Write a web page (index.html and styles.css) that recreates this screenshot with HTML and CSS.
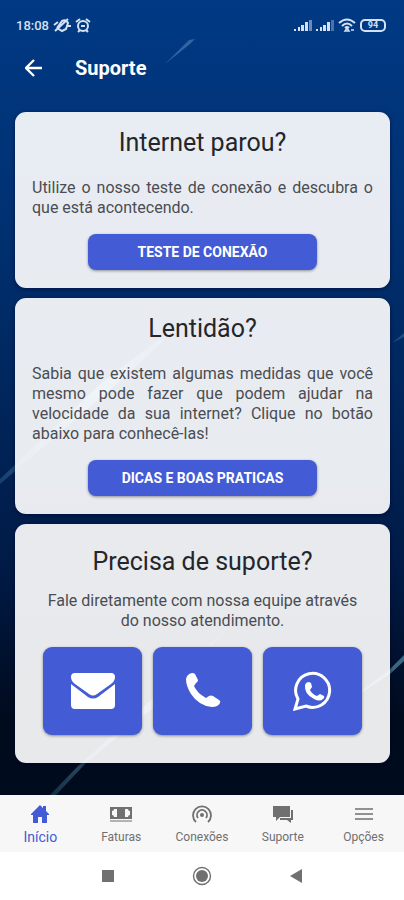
FILE: index.html
```html
<!DOCTYPE html>
<html lang="pt-BR">
  <head>
    <meta charset="UTF-8" />
    <meta name="viewport" content="width=device-width, initial-scale=1.0" />
    <title>Suporte</title>
    <link rel="stylesheet" href="styles.css">
  </head>
  <body>
    <div class="screen">
      <svg class="streaks" viewBox="0 0 404 795" preserveAspectRatio="none" aria-hidden="true">
        <defs>
          <linearGradient id="streak" x1="0" y1="1" x2="1" y2="0">
            <stop offset="0" stop-color="#6fb6d8" stop-opacity="0.2" />
            <stop offset="0.5" stop-color="#7fc0dd" stop-opacity="0.6" />
            <stop offset="1" stop-color="#6fb6d8" stop-opacity="0.1" />
          </linearGradient>
        </defs>
        <path d="M165 64L189 40l6-1-5 5z" fill="#6d9bd0" opacity="0.45" />
        <path d="M0 479L100 384 202 306 110 390 0 484z" fill="url(#streak)" />
        <path d="M392 343l12-10v4l-12 6z" fill="#6fb6d8" opacity="0.25" />
        <path d="M50 795L78 766 160 692 232 622 170 694 86 763 56 795z" fill="url(#streak)" />
        <path d="M350 700L390 669 404 655v6L390 674z" fill="#5fa3c0" opacity="0.6" />
      </svg>

      <div class="status-bar">
        <div class="status-group">
          <span class="clock">18:08</span>
          <svg width="18" height="16" viewBox="0 0 18 16">
            <path d="M4 11l5-7q4-2 6 2l-2 6-4 2-5-3M2 14L15 2M1 8l4-3M14 9h4" fill="none" stroke="currentColor" stroke-width="2" />
          </svg>
          <svg width="16" height="16" viewBox="0 0 16 16">
            <circle cx="8" cy="9" r="5" fill="none" stroke="currentColor" stroke-width="2" />
            <path d="M1 5l4-3M15 5l-4-3M6 9h4M3 15l2-2M13 15l-2-2" fill="none" stroke="currentColor" stroke-width="2" />
          </svg>
        </div>
        <div class="status-group">
          <svg width="18" height="12" viewBox="0 0 18 12" fill="currentColor">
            <path d="M0 10h2v2H0zM4 8h2v4H4zM7 6h3v6H7zM11 3h3v9h-3z" />
            <path d="M15 1h3v11h-3z" opacity="0.5" />
          </svg>
          <svg width="18" height="12" viewBox="0 0 18 12" fill="currentColor">
            <path d="M0 10h2v2H0zM4 8h2v4H4zM7 6h3v6H7zM11 3h3v9h-3z" />
            <path d="M15 1h3v11h-3z" opacity="0.35" />
          </svg>
          <svg width="18" height="14" viewBox="0 0 18 14" fill="none" stroke="currentColor" stroke-width="2">
            <path d="M1 5Q9-2 17 5M4 8Q9 3 14 8M7 10Q9 8 11 10" />
            <path d="M9 10l2 3H7zM13 12h3" stroke-width="1.5" />
          </svg>
          <span class="battery">94</span>
        </div>
      </div>

      <header class="header">
        <button class="back" aria-label="Voltar">
          <svg width="18" height="18" viewBox="0 0 18 18">
            <path d="M17 9H2M9 1L1 9l8 8" fill="none" stroke="currentColor" stroke-width="2.3" />
          </svg>
        </button>
        <h1>Suporte</h1>
      </header>

      <main class="cards">
        <section class="card">
          <h2>Internet parou?</h2>
          <p>Utilize o nosso teste de conexão e descubra o que está acontecendo.</p>
          <button class="button">TESTE DE CONEXÃO</button>
        </section>

        <section class="card">
          <h2>Lentidão?</h2>
          <p>
            Sabia que existem algumas medidas que você mesmo pode fazer que podem
            ajudar na velocidade da sua internet? Clique no botão abaixo para
            conhecê-las!
          </p>
          <button class="button">DICAS E BOAS PRATICAS</button>
        </section>

        <section class="card card-contact">
          <h2>Precisa de suporte?</h2>
          <p>Fale diretamente com nossa equipe através do nosso atendimento.</p>
          <div class="tiles">
            <button class="tile" aria-label="E-mail">
              <svg width="46" height="36" viewBox="0 0 46 36" fill="currentColor">
                <path d="M5 0h36q4 0 4 4 0 4-4 7L27 21q-4 3-8 0L5 11Q1 8 1 4q0-4 4-4z" />
                <path d="M1 11l17 13q5 3 10 0l17-13v21q0 4-4 4H5q-4 0-4-4z" />
              </svg>
            </button>
            <button class="tile" aria-label="Telefone">
              <svg width="38" height="38" viewBox="0 0 38 38" fill="currentColor">
                <path d="M2 7Q3 2 8 1q2 0 3 1l3 6q0 2-2 3l-2 3q3 7 12 12l3-2q2-1 4 0l6 4q2 1 1 3-2 4-8 4Q15 34 7 22 2 14 2 7z" />
              </svg>
            </button>
            <button class="tile" aria-label="WhatsApp">
              <svg width="40" height="40" viewBox="0 0 40 40" fill="currentColor">
                <path d="M5 28a17 17 0 1 1 8 7L2 38z" fill="none" stroke="currentColor" stroke-width="3" />
                <path d="M12 14q1-3 4-3l2 1 1 4-2 3q2 4 7 6l3-2 4 2q1 2-1 3-3 3-9 0-10-5-9-14z" />
              </svg>
            </button>
          </div>
        </section>
      </main>
    </div>

    <nav class="tabs">
      <a class="tab active" href="#inicio">
        <svg width="20" height="20" viewBox="0 0 20 20" fill="currentColor">
          <path d="M10 1l3 3V2h3v5l3 3v1h-2v8h-5v-6H8v6H3v-8H1v-1z" />
        </svg>
        <span>Início</span>
      </a>
      <a class="tab" href="#faturas">
        <svg width="22" height="20" viewBox="0 0 22 20" fill="currentColor">
          <path d="M0 3h22v12H0zM4 5q0 2-2 2v4q2 0 2 2h3V5zM18 5h-3v8h3q0-2 2-2V7q-2 0-2-2z" fill-rule="evenodd" />
          <ellipse cx="11" cy="9" rx="4" ry="5" />
          <path d="M0 16h22v2H0z" opacity="0.5" />
        </svg>
        <span>Faturas</span>
      </a>
      <a class="tab" href="#conexoes">
        <svg width="22" height="20" viewBox="0 0 22 20" fill="none" stroke="currentColor" stroke-width="1.8">
          <path d="M5 18a9 9 0 1 1 12 0M7 14a5 5 0 1 1 8 0" />
          <circle cx="11" cy="11" r="2" fill="currentColor" stroke="none" />
        </svg>
        <span>Conexões</span>
      </a>
      <a class="tab" href="#suporte">
        <svg width="22" height="20" viewBox="0 0 22 20" fill="currentColor">
          <path d="M1 2h17v11H8l-4 4v-4H1z" />
          <path d="M19 6h2v10h-2v3l-4-3H8v-2h11z" />
        </svg>
        <span>Suporte</span>
      </a>
      <a class="tab" href="#opcoes">
        <svg width="20" height="20" viewBox="0 0 20 20" fill="currentColor" opacity="0.75">
          <path d="M1 4h18v2H1zM1 9h18v2H1zM1 14h18v2H1z" />
        </svg>
        <span>Opções</span>
      </a>
    </nav>

    <div class="system-nav">
      <button aria-label="Recentes">
        <svg width="20" height="20" viewBox="0 0 20 20"><path d="M4 4h12v12H4z" fill="currentColor" /></svg>
      </button>
      <button aria-label="Tela inicial">
        <svg width="20" height="20" viewBox="0 0 20 20">
          <circle cx="10" cy="10" r="8.500" fill="none" stroke="currentColor" stroke-width="1.400" />
          <circle cx="10" cy="10" r="6" fill="currentColor" />
        </svg>
      </button>
      <button aria-label="Voltar">
        <svg width="20" height="20" viewBox="0 0 20 20"><path d="M16 3v14L4 10z" fill="currentColor" /></svg>
      </button>
    </div>
  </body>
</html>
```

FILE: styles.css
```css
:root {
  --primary: #435bd4;
  --text: #24262a;
  --text-secondary: #4a4d53;
  --muted: #707070;
}

* {
  box-sizing: border-box;
  margin: 0;
  padding: 0;
  font-family: Roboto, "Liberation Sans", sans-serif;
}

body {
  display: flex;
  flex-direction: column;
  min-height: 100vh;
  background: #ffffff;
}

button {
  border: none;
  background: none;
  color: inherit;
  cursor: pointer;
}

svg {
  display: block;
}

.screen {
  position: relative;
  flex: 1;
  background: linear-gradient(#003984 0%, #003274 25%, #00265c 50%, #001a45 72%, #000b1e 90%, #000c1e 100%);
}

.streaks {
  position: absolute;
  inset: 0;
  width: 100%;
  height: 100%;
}

.status-bar,
.header,
.cards {
  position: relative;
}

.status-bar {
  display: flex;
  justify-content: space-between;
  align-items: center;
  height: 40px;
  padding: 10px 18px 0 16px;
  color: #d5e0f2;
}

.status-group {
  display: flex;
  align-items: center;
  gap: 4px;
}

.clock {
  font-size: 13px;
  font-weight: 500;
}

.battery {
  width: 26px;
  border: 2px solid #d5e0f2;
  border-radius: 5px;
  font-size: 9px;
  line-height: 9px;
  font-weight: 700;
  text-align: center;
}

.header {
  display: flex;
  align-items: center;
  gap: 32px;
  height: 56px;
  padding: 0 25px;
  color: #ffffff;
}

.header h1 {
  font-size: 20px;
  font-weight: 700;
}

.cards {
  display: flex;
  flex-direction: column;
  gap: 10px;
  padding: 16px 14px 32px 15px;
}

.card {
  display: flex;
  flex-direction: column;
  align-items: center;
  padding: 16px 17px 18px;
  background: rgba(255, 255, 255, 0.91);
  border-radius: 11px;
  box-shadow: 0 1px 4px rgba(0, 0, 40, 0.6);
}

.card h2 {
  margin-bottom: 20px;
  font-size: 25px;
  line-height: 30px;
  font-weight: 400;
  color: var(--text);
}

.card p {
  width: 100%;
  margin-bottom: 16px;
  font-size: 16px;
  line-height: 20px;
  color: var(--text-secondary);
  text-align: justify;
}

.button {
  width: 67%;
  height: 36px;
  background: var(--primary);
  border-radius: 8px;
  box-shadow: 0 1px 3px rgba(0, 0, 0, 0.4);
  color: #ffffff;
  font-size: 14px;
  font-weight: 700;
}

.card-contact {
  padding: 23px 28px 28px;
}

.card-contact h2 {
  margin-bottom: 14px;
}

.card-contact p {
  text-align: center;
}

.tiles {
  display: grid;
  grid-template-columns: repeat(3, 1fr);
  gap: 11px;
  width: 100%;
}

.tile {
  display: flex;
  justify-content: center;
  align-items: center;
  height: 88px;
  background: var(--primary);
  border-radius: 9px;
  box-shadow: 0 1px 3px rgba(0, 0, 0, 0.4);
  color: #ffffff;
}

.tabs {
  display: flex;
  height: 57px;
  background: #f7f7f7;
}

.tab {
  flex: 1;
  display: flex;
  flex-direction: column;
  align-items: center;
  gap: 5px;
  padding-top: 9px;
  color: var(--muted);
  font-size: 12px;
  line-height: 16px;
  text-decoration: none;
}

.tab.active {
  color: var(--primary);
  font-size: 14px;
}

.system-nav {
  display: flex;
  justify-content: center;
  align-items: center;
  gap: 74px;
  height: 48px;
  color: var(--muted);
}
```
